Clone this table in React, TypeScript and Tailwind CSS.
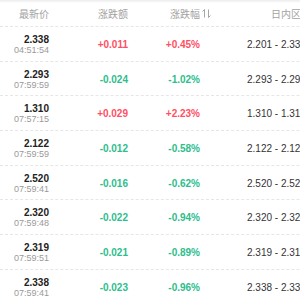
import React from "react";

type Row = { p: string; t: string; c: string; r: string; range: string; up: boolean };

const rows: Row[] = [
  { p: "2.338", t: "04:51:54", c: "+0.011", r: "+0.45%", range: "2.201 - 2.338", up: true },
  { p: "2.293", t: "07:59:59", c: "-0.024", r: "-1.02%", range: "2.293 - 2.293", up: false },
  { p: "1.310", t: "07:57:15", c: "+0.029", r: "+2.23%", range: "1.310 - 1.310", up: true },
  { p: "2.122", t: "07:59:59", c: "-0.012", r: "-0.58%", range: "2.122 - 2.122", up: false },
  { p: "2.520", t: "07:59:41", c: "-0.016", r: "-0.62%", range: "2.520 - 2.520", up: false },
  { p: "2.320", t: "07:59:48", c: "-0.022", r: "-0.94%", range: "2.320 - 2.320", up: false },
  { p: "2.319", t: "07:59:51", c: "-0.021", r: "-0.89%", range: "2.319 - 2.319", up: false },
  { p: "2.338", t: "07:59:41", c: "-0.023", r: "-0.96%", range: "2.338 - 2.338", up: false },
];

const font = { fontFamily: '"Liberation Sans", "Noto Sans CJK SC", Arial, sans-serif' };

function SortIcon() {
  return (
    <svg width="9" height="9" viewBox="0 0 9 9" className="absolute left-[2px] top-[1px]" fill="none" stroke="#a6a6a6" strokeWidth="1">
      <path d="M2.5 0.5 V8.5 M2.5 0.5 L0.5 2.5" />
      <path d="M6.5 0.5 V8.5 M6.5 8.5 L8.5 6.5" />
    </svg>
  );
}

export default function App() {
  return (
    <div className="w-[300px] h-[300px] overflow-hidden bg-white relative" style={font}>
      <div className="absolute left-0 top-0 w-full h-[3px] bg-gradient-to-b from-[#ececec] to-white" />
      <div className="w-[400px]">
        <div className="flex h-[27px] items-center pt-[3px] text-[10px] text-[#a3a3a3] border-b border-dashed border-[#e6e6e6]">
          <div className="w-[49px] text-right">最新价</div>
          <div className="w-[79px] text-right">涨跌额</div>
          <div className="w-[72px] text-right relative">
            涨跌幅
            <span className="absolute left-full top-[1px] w-[12px] h-[10px]">
              <SortIcon />
            </span>
          </div>
          <div className="pl-[71px]">日内区间</div>
        </div>
        {rows.map((row, i) => (
          <div key={i} className="flex h-[34.7px] items-center border-b border-dashed border-[#e6e6e6]">
            <div className="w-[49px] text-right flex flex-col pt-[2px]">
              <span className="text-[10px] leading-[11px] font-bold text-[#222]">{row.p}</span>
              <span className="text-[9px] leading-[11px] text-[#9a9a9a]">{row.t}</span>
            </div>
            <div className={`w-[79px] text-right text-[10px] font-bold pt-[1px] ${row.up ? "text-[#ff4f63]" : "text-[#2ebd8c]"}`}>{row.c}</div>
            <div className={`w-[72px] text-right text-[10px] font-bold pt-[1px] ${row.up ? "text-[#ff4f63]" : "text-[#2ebd8c]"}`}>{row.r}</div>
            <div className="pl-[47px] text-[10px] text-[#333] whitespace-nowrap pt-[1px]">{row.range}</div>
          </div>
        ))}
      </div>
    </div>
  );
}
